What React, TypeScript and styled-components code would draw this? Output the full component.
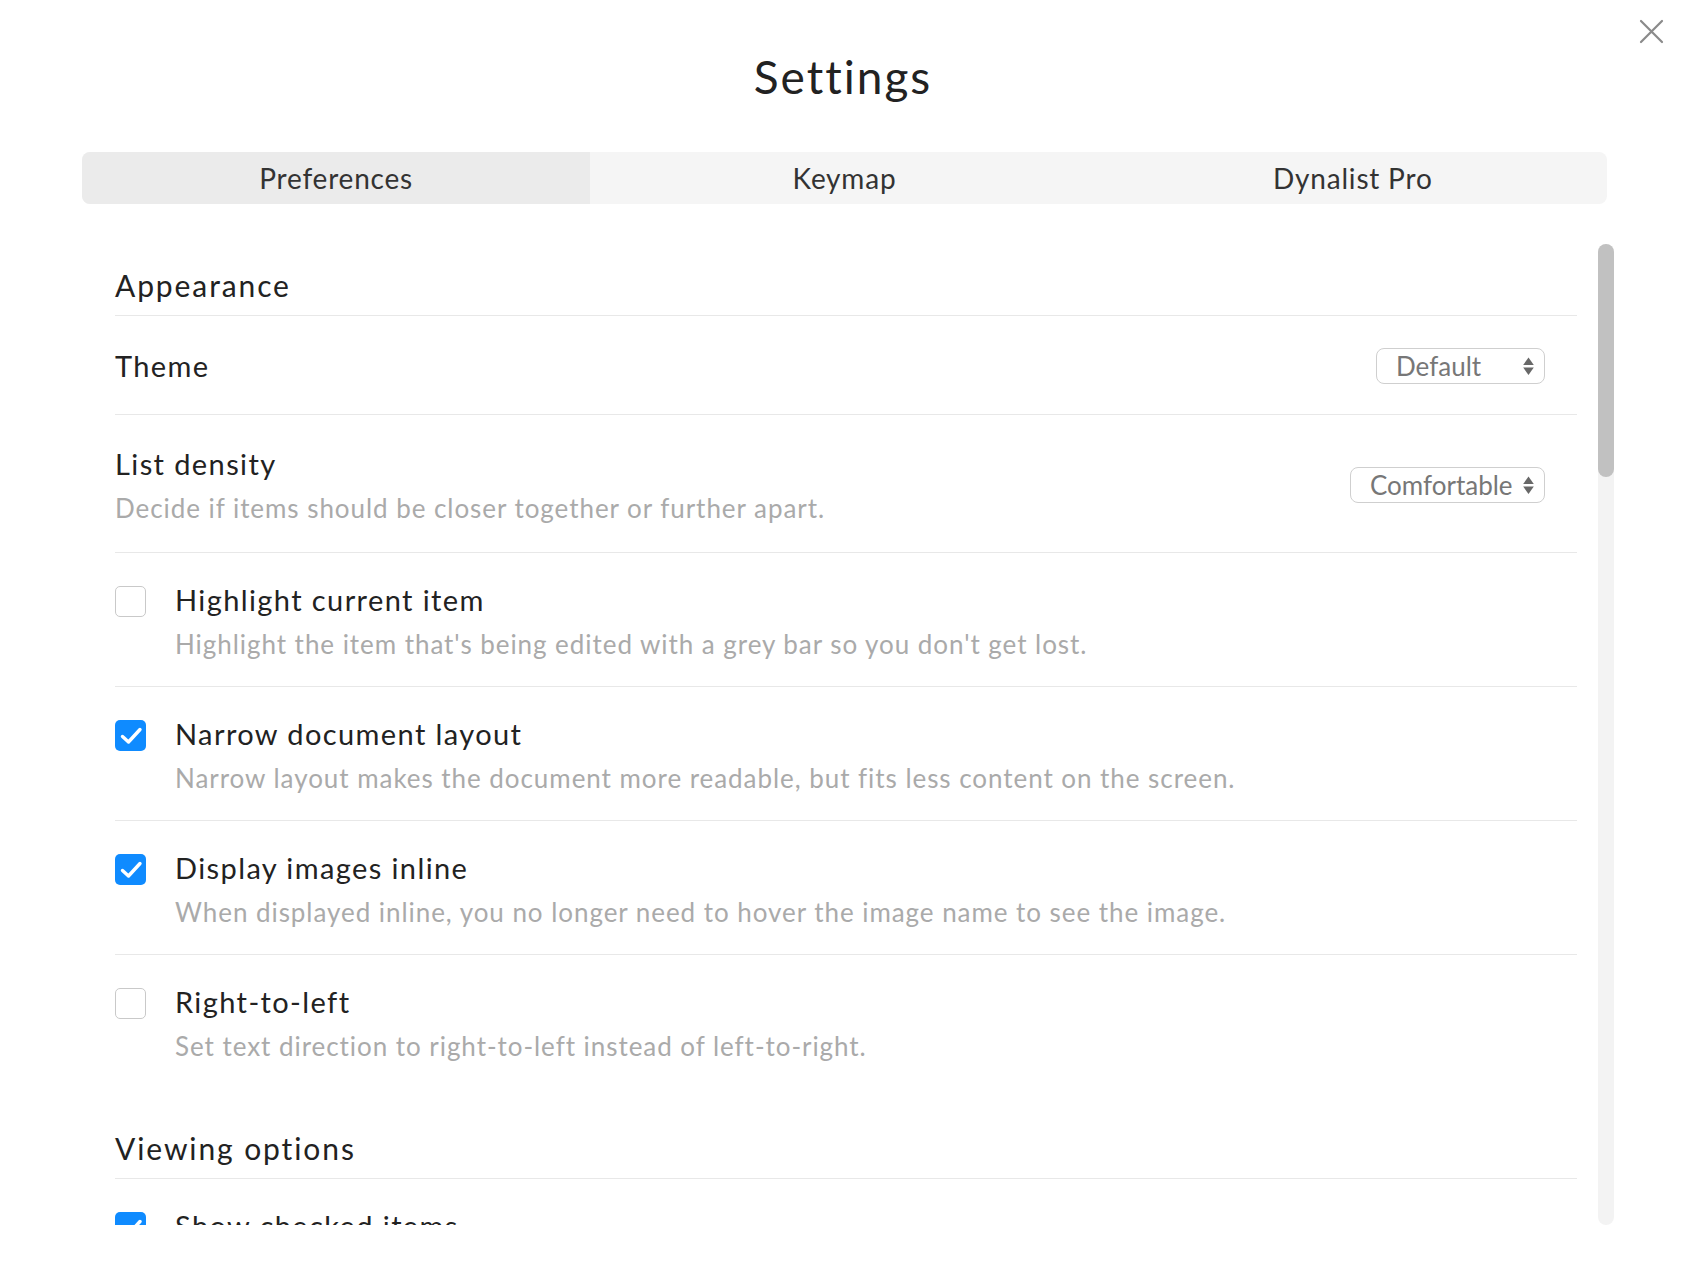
import { useLayoutEffect, useRef, useState } from "react"
import styled, { createGlobalStyle } from "styled-components"

const GlobalStyle = createGlobalStyle`
  html, body {
    margin: 0;
    padding: 0;
    background: #fff;
  }

  body {
    font-family: Lato, "Open Sans", "Liberation Sans", sans-serif;
    color: #222;
    -webkit-font-smoothing: antialiased;
  }

  * {
    box-sizing: border-box;
  }
`

const Modal = styled.div`
  position: relative;
  height: 1280px;
  display: flex;
  flex-direction: column;
  overflow: hidden;
`

const CloseButton = styled.button`
  position: absolute;
  top: 19px;
  right: 22px;
  width: 25px;
  height: 25px;
  padding: 0;
  border: 0;
  background: none;
  cursor: pointer;
  display: flex;
  align-items: center;
  justify-content: center;
`

const Title = styled.h1`
  margin: 0;
  padding-top: 49px;
  text-align: center;
  font-size: 46px;
  line-height: 56px;
  font-weight: 400;
  color: #222;
  letter-spacing: 2px;
`

const TabBar = styled.div`
  display: grid;
  grid-template-columns: repeat(3, 1fr);
  margin: 47px 0 0 82px;
  width: 1525px;
  height: 52px;
  background: #f5f5f5;
  border-radius: 8px;
  overflow: hidden;
`

const Tab = styled.button<{ $active?: boolean }>`
  border: 0;
  margin: 0;
  padding: 0;
  font-family: inherit;
  font-size: 28px;
  letter-spacing: 0.8px;
  color: #333;
  background: ${p => (p.$active ? "#ebebeb" : "transparent")};
  cursor: pointer;
`

const ScrollFrame = styled.div`
  display: flex;
  margin: 40px 72px 0 82px;
  height: 981px;
`

const Scroller = styled.div`
  flex: 1;
  min-width: 0;
  overflow-y: auto;
  padding: 0 21px 0 33px;
  scrollbar-width: none;

  &::-webkit-scrollbar {
    display: none;
  }
`

const ScrollTrack = styled.div`
  position: relative;
  flex: none;
  width: 16px;
  background: #f3f3f3;
  border-radius: 8px;
`

const ScrollThumb = styled.div`
  position: absolute;
  left: 0;
  right: 0;
  background: #c1c1c1;
  border-radius: 8px;
`

const Content = styled.div`
  padding-bottom: 16px;
`

const Section = styled.section`
  padding-top: 23px;

  & + & {
    margin-top: 19px;
  }
`

const SectionTitle = styled.h2`
  margin: 0;
  padding-bottom: 12px;
  font-size: 30px;
  line-height: 36px;
  font-weight: 400;
  letter-spacing: 1.9px;
  color: #222;
  border-bottom: 1px solid #e8e8e8;
`

const Row = styled.div<{ $compact?: boolean }>`
  display: flex;
  align-items: ${p => (p.$compact ? "center" : "flex-start")};
  padding: ${p => (p.$compact ? "32px 32px 30px 0" : "29px 32px 26px 0")};
  border-bottom: 1px solid #e8e8e8;

  &:last-child {
    border-bottom: 0;
  }
`

const SelectRow = styled(Row)`
  align-items: center;
  padding: 31px 32px 28px 0;
`

const Text = styled.div`
  flex: 1;
  min-width: 0;
`

const Label = styled.div`
  font-size: 29px;
  line-height: 36px;
  letter-spacing: 1.4px;
  color: #222;
`

const Hint = styled.div`
  margin-top: 10px;
  font-size: 26px;
  line-height: 32px;
  letter-spacing: 0.95px;
  color: #aaa;
`

const Box = styled.span<{ $checked: boolean }>`
  flex: none;
  width: 31px;
  height: 31px;
  margin: 4px 29px 0 0;
  border-radius: 5px;
  border: ${p => (p.$checked ? "0" : "1.5px solid #c9c9c9")};
  background: ${p => (p.$checked ? "#0f8bff" : "#fff")};
  display: flex;
  align-items: center;
  justify-content: center;
  cursor: pointer;
`

const SelectBox = styled.div<{ $width: number }>`
  flex: none;
  width: ${p => p.$width}px;
  height: 36px;
  display: flex;
  align-items: center;
  justify-content: space-between;
  padding: 0 9px 0 19px;
  border: 1.5px solid #cfcfcf;
  border-radius: 8px;
  font-size: 26px;
  color: #777;
  cursor: pointer;

  svg {
    flex: none;
  }
`

type CheckItem = {
  key: string
  label: string
  hint: string
  checked: boolean
}

type SelectItem = {
  key: string
  label: string
  hint: string
  value: string
  width: number
}

const appearanceChecks: CheckItem[] = [
  { key: "highlight", label: "Highlight current item", hint: "Highlight the item that's being edited with a grey bar so you don't get lost.", checked: false },
  { key: "narrow", label: "Narrow document layout", hint: "Narrow layout makes the document more readable, but fits less content on the screen.", checked: true },
  { key: "images", label: "Display images inline", hint: "When displayed inline, you no longer need to hover the image name to see the image.", checked: true },
  { key: "rtl", label: "Right-to-left", hint: "Set text direction to right-to-left instead of left-to-right.", checked: false },
]

const viewingChecks: CheckItem[] = [
  { key: "checked", label: "Show checked items", hint: "Checked items will be shown with a strikethrough instead of being hidden.", checked: true },
  { key: "counts", label: "Show item counts", hint: "Show the number of children next to collapsed items.", checked: false },
  { key: "notes", label: "Show notes preview", hint: "Show the first line of an item's note below it.", checked: true },
  { key: "links", label: "Show link previews", hint: "Display the title of a link instead of the full address.", checked: true },
  { key: "dates", label: "Show dates in color", hint: "Dates that are due soon are highlighted so they stand out.", checked: true },
]

const editingChecks: CheckItem[] = [
  { key: "autocomplete", label: "Autocomplete tags", hint: "Suggest existing tags as you type a # or @ character.", checked: true },
  { key: "markdown", label: "Render Markdown", hint: "Format bold, italic and code as you type.", checked: true },
  { key: "spell", label: "Spell check", hint: "Underline words that might be misspelled.", checked: false },
  { key: "paste", label: "Split pasted text into items", hint: "Each line of pasted text becomes its own item.", checked: true },
  { key: "confirm", label: "Confirm before deleting", hint: "Ask before deleting an item that has children.", checked: true },
]

const dateSelects: SelectItem[] = [
  { key: "dateFormat", label: "Date format", hint: "How dates are displayed in your documents.", value: "YYYY-MM-DD", width: 210 },
  { key: "timeFormat", label: "Time format", hint: "Use a 12-hour or 24-hour clock.", value: "24-hour", width: 169 },
  { key: "weekStart", label: "First day of week", hint: "Used by the date picker and calendar view.", value: "Monday", width: 169 },
]

const backupChecks: CheckItem[] = [
  { key: "backup", label: "Automatic backup", hint: "Back up your documents to a connected cloud storage every day.", checked: false },
  { key: "offline", label: "Offline mode", hint: "Keep a copy of your documents on this device for offline use.", checked: true },
  { key: "sync", label: "Sync on startup", hint: "Fetch the latest changes as soon as the app opens.", checked: true },
  { key: "analytics", label: "Send usage data", hint: "Help us improve by sending anonymous usage statistics.", checked: false },
]

const advancedChecks: CheckItem[] = [
  { key: "shortcuts", label: "Show keyboard shortcut hints", hint: "Display shortcut keys next to menu items.", checked: true },
  { key: "animations", label: "Reduce animations", hint: "Turn off expanding and collapsing animations.", checked: false },
  { key: "beta", label: "Enable beta features", hint: "Try new features before they are released to everyone.", checked: false },
  { key: "debug", label: "Developer mode", hint: "Show extra information that helps when reporting bugs.", checked: false },
]

const CloseIcon = () => (
  <svg width="25" height="25" viewBox="0 0 25 25">
    <path d="M2 2 L23 23 M23 2 L2 23" stroke="#8a8a8a" strokeWidth="2.2" strokeLinecap="round" fill="none" />
  </svg>
)

const CheckIcon = () => (
  <svg width="24" height="20" viewBox="0 0 24 20">
    <path d="M3.5 10.5 L9.5 16 L21 3.5" stroke="#fff" strokeWidth="3.4" strokeLinecap="round" strokeLinejoin="round" fill="none" />
  </svg>
)

const ArrowsIcon = () => (
  <svg width="13" height="26" viewBox="0 0 13 26">
    <path d="M6.5 4.5 L11.8 12 L1.2 12 Z" fill="#686868" />
    <path d="M1.2 14.5 L11.8 14.5 L6.5 22 Z" fill="#686868" />
  </svg>
)

const Select = ({ value, width }: { value: string; width: number }) => (
  <SelectBox $width={width}>
    <span>{value}</span>
    <ArrowsIcon />
  </SelectBox>
)

const CheckRow = ({ item, checked, onToggle }: { item: CheckItem; checked: boolean; onToggle: () => void }) => (
  <Row>
    <Box $checked={checked} onClick={onToggle}>
      {checked && <CheckIcon />}
    </Box>
    <Text>
      <Label>{item.label}</Label>
      <Hint>{item.hint}</Hint>
    </Text>
  </Row>
)

const tabs = ["Preferences", "Keymap", "Dynalist Pro"]
const TRACK_HEIGHT = 981

const App = () => {
  const scrollRef = useRef<HTMLDivElement>(null)
  const [activeTab, setActiveTab] = useState("Preferences")
  const [thumb, setThumb] = useState({ top: 0, height: 232 })
  const [checks, setChecks] = useState<Record<string, boolean>>(() => {
    const all = [...appearanceChecks, ...viewingChecks, ...editingChecks, ...backupChecks, ...advancedChecks]
    return Object.fromEntries(all.map(i => [i.key, i.checked]))
  })

  // Fake scrollbar, since the real one is hidden
  const updateThumb = () => {
    const el = scrollRef.current
    if (!el) return
    const height = Math.max(40, (TRACK_HEIGHT * el.clientHeight) / el.scrollHeight)
    const maxScroll = el.scrollHeight - el.clientHeight
    const top = maxScroll > 0 ? (el.scrollTop / maxScroll) * (TRACK_HEIGHT - height) : 0
    setThumb({ top, height })
  }

  useLayoutEffect(updateThumb, [])

  const toggle = (key: string) => setChecks(c => ({ ...c, [key]: !c[key] }))

  const renderChecks = (items: CheckItem[]) =>
    items.map(item => (
      <CheckRow key={item.key} item={item} checked={checks[item.key]} onToggle={() => toggle(item.key)} />
    ))

  return (
    <Modal>
      <GlobalStyle />
      <CloseButton aria-label="Close">
        <CloseIcon />
      </CloseButton>

      <Title>Settings</Title>

      <TabBar>
        {tabs.map(t => (
          <Tab key={t} $active={t === activeTab} onClick={() => setActiveTab(t)}>
            {t}
          </Tab>
        ))}
      </TabBar>

      <ScrollFrame>
        <Scroller ref={scrollRef} onScroll={updateThumb}>
          <Content>
            <Section>
              <SectionTitle>Appearance</SectionTitle>
              <Row $compact>
                <Text>
                  <Label>Theme</Label>
                </Text>
                <Select value="Default" width={169} />
              </Row>
              <SelectRow>
                <Text>
                  <Label>List density</Label>
                  <Hint>Decide if items should be closer together or further apart.</Hint>
                </Text>
                <Select value="Comfortable" width={195} />
              </SelectRow>
              {renderChecks(appearanceChecks)}
            </Section>

            <Section>
              <SectionTitle>Viewing options</SectionTitle>
              {renderChecks(viewingChecks)}
            </Section>

            <Section>
              <SectionTitle>Editing</SectionTitle>
              {renderChecks(editingChecks)}
            </Section>

            <Section>
              <SectionTitle>Date and time</SectionTitle>
              {dateSelects.map(s => (
                <SelectRow key={s.key}>
                  <Text>
                    <Label>{s.label}</Label>
                    <Hint>{s.hint}</Hint>
                  </Text>
                  <Select value={s.value} width={s.width} />
                </SelectRow>
              ))}
            </Section>

            <Section>
              <SectionTitle>Sync and backup</SectionTitle>
              {renderChecks(backupChecks)}
            </Section>

            <Section>
              <SectionTitle>Advanced</SectionTitle>
              {renderChecks(advancedChecks)}
            </Section>
          </Content>
        </Scroller>
        <ScrollTrack>
          <ScrollThumb style={{ top: thumb.top, height: thumb.height }} />
        </ScrollTrack>
      </ScrollFrame>
    </Modal>
  )
}

export default App
